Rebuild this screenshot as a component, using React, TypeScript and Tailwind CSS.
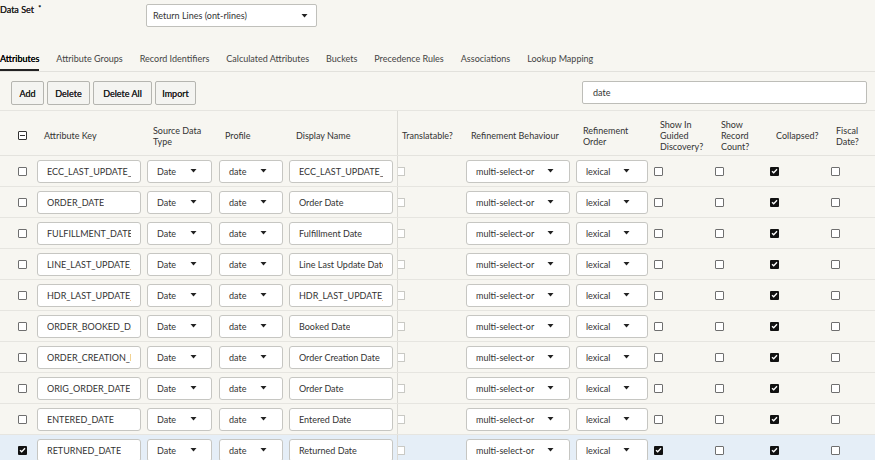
import React from "react";

type Row = {
  key: string;
  display: string;
  selected?: boolean;
  guided?: boolean;
};

const ROWS: Row[] = [
  { key: "ECC_LAST_UPDATE_DATE", display: "ECC_LAST_UPDATE_DATE" },
  { key: "ORDER_DATE", display: "Order Date" },
  { key: "FULFILLMENT_DATE", display: "Fulfillment Date" },
  { key: "LINE_LAST_UPDATE_DATE", display: "Line Last Update Date" },
  { key: "HDR_LAST_UPDATE_DATE", display: "HDR_LAST_UPDATE_DATE" },
  { key: "ORDER_BOOKED_DATE", display: "Booked Date" },
  { key: "ORDER_CREATION_DATE", display: "Order Creation Date" },
  { key: "ORIG_ORDER_DATE", display: "Order Date" },
  { key: "ENTERED_DATE", display: "Entered Date" },
  { key: "RETURNED_DATE", display: "Returned Date", selected: true, guided: true },
];

const TABS = [
  "Attributes",
  "Attribute Groups",
  "Record Identifiers",
  "Calculated Attributes",
  "Buckets",
  "Precedence Rules",
  "Associations",
  "Lookup Mapping",
];

const BUTTONS = [
  { label: "Add", w: "w-[33px]" },
  { label: "Delete", w: "w-[43px]" },
  { label: "Delete All", w: "w-[59px]" },
  { label: "Import", w: "w-[41px]" },
];

const GRID =
  "grid grid-cols-[37px_110px_72px_70px_108px_69px_110px_78px_61px_55px_61px_44px]";

function Caret() {
  return (
    <svg width="7" height="4" viewBox="0 0 7 4" className="shrink-0">
      <path d="M0.5 0h6L3.5 3.6z" fill="#222" />
    </svg>
  );
}

function Check({ checked }: { checked?: boolean }) {
  if (checked) {
    return (
      <span className="flex h-[9px] w-[9px] items-center justify-center rounded-[1px] bg-[#111]">
        <svg width="7" height="6" viewBox="0 0 7 6">
          <path d="M1 3.2l1.7 1.6L6 1.2" stroke="#fff" strokeWidth="1.3" fill="none" />
        </svg>
      </span>
    );
  }
  return <span className="block h-[9px] w-[9px] rounded-[1px] border border-[#6f6f6f] bg-white" />;
}

function TextBox({ value }: { value: string }) {
  return (
    <div className="flex h-[23px] w-[104px] items-center overflow-hidden whitespace-nowrap rounded-[3px] border border-[#c6c6c2] bg-white pl-[9px] pr-[9px] text-[#333]">
      <span className="overflow-hidden">{value}</span>
    </div>
  );
}

function Select({ value, w, span }: { value: string; w: string; span: string }) {
  return (
    <div
      className={`${w} flex h-[23px] items-center rounded-[3px] border border-[#c6c6c2] bg-white pl-[9px] text-[#333]`}
    >
      <span className={span}>{value}</span>
      <Caret />
    </div>
  );
}

export default function App() {
  return (
    <div className="h-[460px] w-[875px] overflow-hidden bg-[#f7f6f1] font-['Lato',_sans-serif] text-[9px] leading-[11px] text-[#333]">
      {/* data set */}
      <div className="flex items-start pt-[4px]">
        <div className="w-[146px] text-[#222] [text-shadow:0_0_0.4px_#222]">
          Data Set <sup className="relative -top-[2px] ml-[2px] text-[7px]">*</sup>
        </div>
        <div className="flex h-[23px] w-[171px] items-center rounded-[2px] border border-[#c0c0bb] bg-white pl-[6px] text-[#333]">
          <span className="w-[148px]">Return Lines (ont-rlines)</span>
          <Caret />
        </div>
      </div>

      {/* tabs */}
      <div className="mt-[19px] flex h-[26px] items-stretch gap-[17px] border-b border-[#e2e1dc]">
        {TABS.map((t, i) => (
          <div
            key={t}
            className={
              i === 0
                ? "flex items-center border-b-2 border-[#222] pt-[1px] text-black [text-shadow:0_0_0.3px_#000]"
                : "flex items-center pb-[1px] text-[#444]"
            }
          >
            {t}
          </div>
        ))}
      </div>

      {/* toolbar */}
      <div className="flex items-start gap-[3px] border-b border-[#e6e5e0] pb-[5px] pl-[11px] pt-[9px]">
        {BUTTONS.map((b) => (
          <button
            key={b.label}
            className={`${b.w} h-[24px] rounded-[2px] border border-[#b5b5b0] bg-[#f4f4f1] text-[#222] [text-shadow:0_0_0.3px_#222]`}
          >
            {b.label}
          </button>
        ))}
        <div className="ml-auto mr-[8px] flex h-[23px] w-[285px] items-center rounded-[2px] border border-[#bdbdb8] bg-white pl-[10px] text-[#333]">
          date
        </div>
      </div>

      {/* header */}
      <div className={`${GRID} h-[45px] border-b border-[#e4e3de] pt-[5px]`}>
        <div className="flex items-center pl-[18px]">
          <span className="flex h-[9px] w-[9px] items-center justify-center rounded-[1px] border border-[#333] bg-white">
            <span className="h-px w-[5px] bg-[#333]" />
          </span>
        </div>
        <div className="flex items-center pl-[7px]">Attribute Key</div>
        <div className="flex items-center pl-[6px]">
          Source Data
          <br />
          Type
        </div>
        <div className="flex items-center pl-[6px]">Profile</div>
        <div className="flex items-center pl-[7px]">Display Name</div>
        <div className="-mt-[5px] flex items-center border-l border-[#dcdbd6] pl-[4px] pt-[5px]">
          Translatable?
        </div>
        <div className="flex items-center pl-[5px]">Refinement Behaviour</div>
        <div className="flex items-center pl-[7px]">
          Refinement
          <br />
          Order
        </div>
        <div className="flex items-center pl-[6px]">
          Show In
          <br />
          Guided
          <br />
          Discovery?
        </div>
        <div className="flex items-center pl-[6px]">
          Show
          <br />
          Record
          <br />
          Count?
        </div>
        <div className="flex items-center pl-[6px]">Collapsed?</div>
        <div className="flex items-center pl-[5px]">
          Fiscal
          <br />
          Date?
        </div>
      </div>

      {/* rows */}
      {ROWS.map((r) => (
        <div
          key={r.key}
          className={`${GRID} h-[31px] border-b ${
            r.selected ? "border-[#d3e1ef] bg-[#e5eef7]" : "border-[#e6e5e0]"
          }`}
        >
          <div className="flex items-center pl-[18px]">
            <Check checked={r.selected} />
          </div>
          <div className="flex items-center">
            <TextBox value={r.key} />
          </div>
          <div className="flex items-center">
            <Select value="Date" w="w-[65px]" span="w-[33px]" />
          </div>
          <div className="flex items-center">
            <Select value="date" w="w-[64px]" span="w-[31px]" />
          </div>
          <div className="flex items-center">
            <TextBox value={r.display} />
          </div>
          <div className="flex items-center border-l border-[#dcdbd6]">
            <span className="block h-[9px] w-[7px] rounded-r-[1px] border border-l-0 border-[#c9c9c4] bg-white" />
          </div>
          <div className="flex items-center">
            <Select value="multi-select-or" w="w-[104px]" span="w-[71px]" />
          </div>
          <div className="flex items-center">
            <Select value="lexical" w="w-[72px]" span="w-[37px]" />
          </div>
          <div className="flex items-center">
            <Check checked={r.guided} />
          </div>
          <div className="flex items-center">
            <Check />
          </div>
          <div className="flex items-center">
            <Check checked />
          </div>
          <div className="flex items-center">
            <Check />
          </div>
        </div>
      ))}
    </div>
  );
}
